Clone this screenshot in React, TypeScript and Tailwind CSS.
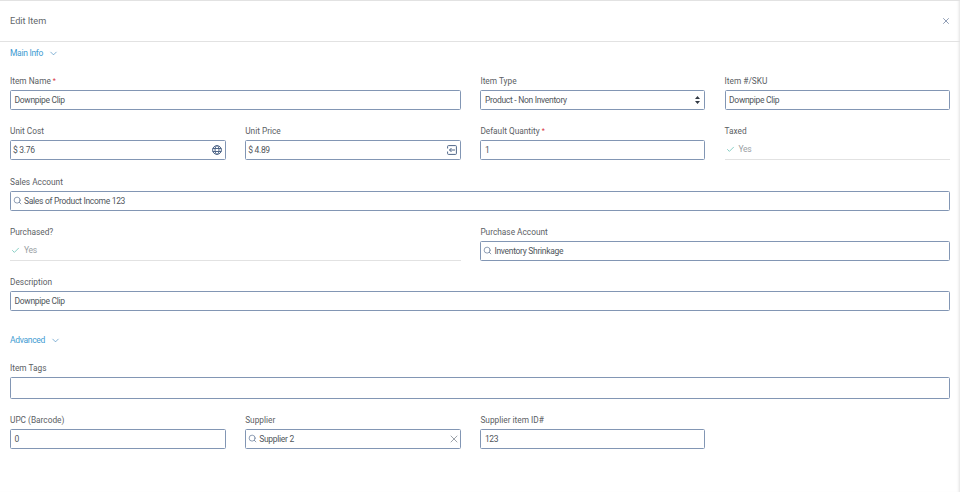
import React from "react";
import { Check, ChevronDown, Search, X } from "lucide-react";

function Label({ children, required }: { children: React.ReactNode; required?: boolean }) {
  return (
    <div className="h-5 pt-[5px] text-[8.3px] leading-[12px] text-[#5b6064]">
      {children}
      {required && <span className="relative top-[-1.5px] ml-[2px] text-[7px] text-[#d9363e]">*</span>}
    </div>
  );
}

function Box({ children, className = "" }: { children?: React.ReactNode; className?: string }) {
  return (
    <div
      className={`flex h-5 items-center rounded-[1.5px] border border-[#8296b4] bg-white text-[8.5px] tracking-[-0.3px] text-[#50565c] ${className}`}
    >
      {children}
    </div>
  );
}

function TextField({ label, value, required, className = "" }: { label: string; value?: string; required?: boolean; className?: string }) {
  return (
    <div className={className}>
      <Label required={required}>{label}</Label>
      <Box className="pl-[3.5px]">{value}</Box>
    </div>
  );
}

function SearchField({ label, value, className = "", clear }: { label: string; value: string; className?: string; clear?: boolean }) {
  return (
    <div className={className}>
      <Label>{label}</Label>
      <Box className="pl-[1.5px] pr-[0.5px]">
        <Search size={9} strokeWidth={1.7} className="mb-[1.5px] ml-[0.5px] mr-[2px] text-[#51688a]" />
        <span className="flex-1">{value}</span>
        {clear && <X size={12} strokeWidth={1.2} className="text-[#5a6470]" />}
      </Box>
    </div>
  );
}

function YesField({ label, className = "" }: { label: string; className?: string }) {
  return (
    <div className={className}>
      <Label>{label}</Label>
      <div className="flex h-5 items-center gap-[4px] border-b border-[#e2e2e2] pl-[1px] text-[8.5px] tracking-[-0.3px] text-[#9aa0a4]">
        <Check size={9} strokeWidth={1.8} className="text-[#4fb8a8]" />
        Yes
      </div>
    </div>
  );
}

function SectionTitle({ children, className = "" }: { children: React.ReactNode; className?: string }) {
  return (
    <div className={`flex items-center gap-[5px] text-[8.5px] tracking-[-0.3px] text-[#3e9bd2] ${className}`}>
      {children}
      <ChevronDown size={11} strokeWidth={1.4} className="text-[#3d86bd]" />
    </div>
  );
}

const rowGrid = "grid grid-cols-[216px_216px_225px_225.4px] gap-x-[19.2px] gap-y-[10px]";

export default function App() {
  return (
    <div className="h-[492px] w-[960px] overflow-hidden bg-white font-['Roboto',sans-serif] shadow-[inset_-3px_0_3px_-2px_rgba(0,0,0,0.12)]">
      <header className="flex h-[42px] items-center justify-between border-y border-[#e2e2e2] pl-[10px] pr-[9px] text-[9.2px] text-[#62676b]">
        <span>Edit Item</span>
        <X size={10} strokeWidth={1.5} className="text-[#4d6488]" />
      </header>

      <div className="px-[10px]">
        <SectionTitle className="h-[22px]">Main Info</SectionTitle>
        <div className="h-[6px]" />
        <div className={rowGrid}>
          <TextField className="col-span-2" label="Item Name" value="Downpipe Clip" required />
          <div>
            <Label>Item Type</Label>
            <Box className="justify-between pl-[3.5px] pr-[4px]">
              Product - Non Inventory
              <svg width="5" height="8" viewBox="0 0 5 8" fill="#333a44">
                <path d="M2.5 0 L5 3 H0 Z M0 5 H5 L2.5 8 Z" />
              </svg>
            </Box>
          </div>
          <TextField label="Item #/SKU" value="Downpipe Clip" />

          <div>
            <Label>Unit Cost</Label>
            <Box className="justify-between pl-[2px] pr-[3px]">
              $ 3.76
              <svg width="10" height="10" viewBox="0 0 10 10" fill="none" stroke="#4f6688" strokeWidth="1">
                <circle cx="5" cy="5" r="4.4" />
                <ellipse cx="5" cy="5" rx="2" ry="4.4" />
                <path d="M0.6 3.5 H9.4 M0.6 6.5 H9.4" />
              </svg>
            </Box>
          </div>
          <div>
            <Label>Unit Price</Label>
            <Box className="justify-between pl-[2px] pr-[3px]">
              $ 4.89
              <svg width="10" height="10" viewBox="0 0 10 10" fill="none" stroke="#4f6688" strokeWidth="1">
                <path d="M0.6 3.5 V1.4 Q0.6 0.6 1.4 0.6 H8.6 Q9.4 0.6 9.4 1.4 V8.6 Q9.4 9.4 8.6 9.4 H1.4 Q0.6 9.4 0.6 8.6 V6.5" />
                <path d="M8 5 H2.5 M4.5 3 L2.5 5 L4.5 7" />
              </svg>
            </Box>
          </div>
          <TextField label="Default Quantity" value="1" required />
          <YesField label="Taxed" />
        </div>

        <div className={`${rowGrid} mt-[11px]`}>
          <SearchField className="col-span-4" label="Sales Account" value="Sales of Product Income 123" />
          <YesField className="col-span-2" label="Purchased?" />
          <SearchField className="col-span-2" label="Purchase Account" value="Inventory Shrinkage" />
          <TextField className="col-span-4" label="Description" value="Downpipe Clip" />
        </div>

        <SectionTitle className="mt-[19px] h-[20px]">Advanced</SectionTitle>
        <div className="h-[7px]" />
        <div className={rowGrid}>
          <div className="col-span-4">
            <Label>Item Tags</Label>
            <Box className="h-[22px]" />
          </div>
          <TextField label="UPC (Barcode)" value="0" />
          <SearchField label="Supplier" value="Supplier 2" clear />
          <TextField label="Supplier item ID#" value="123" />
        </div>
      </div>
    </div>
  );
}
